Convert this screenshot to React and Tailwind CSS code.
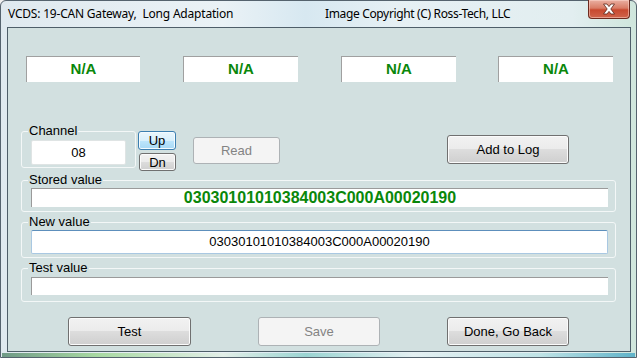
const CLIENT_BG = 'bg-[#d2e0e0]';

function NaBox({ className = '' }) {
  return (
    <div className={`flex h-[26px] items-center justify-center border-l border-t border-[#a0a0a0] bg-white text-[15px] font-bold text-[#0a870a] ${className}`}>
      N/A
    </div>
  );
}

function GroupBox({ label, className = '', children }) {
  return (
    <div className={`relative rounded-[3px] border border-[#f3f7f7] ${className}`}>
      <span className={`absolute -top-[9px] left-[6px] px-[1px] text-[13px] leading-[15px] text-black ${CLIENT_BG}`}>
        {label}
      </span>
      {children}
    </div>
  );
}

function Button({ children, className = '', disabled = false, hot = false }) {
  const look = disabled
    ? 'border-[#adb2b5] bg-[#f4f4f4] text-[#838383]'
    : hot
      ? 'border-[#3c7fb1] bg-[linear-gradient(#eaf6fd,#d9f0fc_50%,#bee6fd_50%,#a7d9f5)] text-black shadow-[inset_0_0_0_1px_#f4fbff]'
      : 'border-[#707070] bg-[linear-gradient(#f2f2f2,#ebebeb_50%,#dddddd_50%,#cfcfcf)] text-black shadow-[inset_0_0_0_1px_#fbfbfb]';
  return (
    <div className={`flex items-center justify-center rounded-[3px] border text-[13px] leading-none ${look} ${className}`}>
      {children}
    </div>
  );
}

function CloseButton() {
  return (
    <div className="flex h-[19px] w-[42px] items-center justify-center rounded-b-[4px] border border-t-0 border-[#6d2a1e] bg-[linear-gradient(#eab0a2,#d97c66_45%,#c8492f_55%,#d0654c)] shadow-[inset_0_0_0_1px_rgba(255,220,210,0.5)]">
      <svg width="14" height="12" viewBox="0 0 14 12">
        <path
          d="M1.5 1 H5 L7 3.6 L9 1 H12.5 L8.8 6 L12.5 11 H9 L7 8.4 L5 11 H1.5 L5.2 6 Z"
          fill="#ffffff"
          stroke="#5a2318"
          strokeWidth="0.8"
          strokeLinejoin="round"
        />
      </svg>
    </div>
  );
}

export default function App() {
  return (
    <div className="h-[358px] w-[637px] overflow-hidden bg-[#f0f0f0] font-['Liberation_Sans',Arial,sans-serif]">
      {/* ── Window frame ─────────────────────────────────────────────── */}
      <div className="relative h-[358px] w-[637px] rounded-t-[6px] border border-[#55636e] bg-[linear-gradient(90deg,#dfe9ef,#eaf2f6_35%,#d7e8f1_48%,#e6f0f4_62%,#e2eef0_90%,#cfe6dc)]">
        {/* Title bar */}
        <div className="flex h-[26px] items-start">
          <span className="ml-[7px] mt-[5px] w-[317px] font-['Noto_Sans',sans-serif] text-[12px] leading-[16px] tracking-[-0.2px] text-black">
            VCDS: 19-CAN Gateway,&nbsp; Long Adaptation
          </span>
          <span className="mt-[5px] font-['Noto_Sans',sans-serif] text-[12px] leading-[16px] tracking-[-0.35px] text-black">
            Image Copyright (C) Ross-Tech, LLC
          </span>
          <div className="ml-auto mr-[6px] -mt-px">
            <CloseButton />
          </div>
        </div>

        {/* Client area */}
        <div className={`ml-[6px] h-[325px] w-[624px] border border-[#4e5e69] ${CLIENT_BG}`}>
          {/* N/A readouts */}
          <div className="mt-[28px] flex pl-[18px]">
            <NaBox className="w-[114px]" />
            <NaBox className="ml-[43px] w-[115px]" />
            <NaBox className="ml-[43px] w-[115px]" />
            <NaBox className="ml-[42px] w-[115px]" />
          </div>

          {/* Channel / Up / Dn / Read / Add to Log */}
          <div className="mt-[49px] flex items-start pl-[13px]">
            <GroupBox label="Channel" className="h-[37px] w-[115px]">
              <div className="ml-[9px] mt-[8px] flex h-[25px] w-[95px] items-center justify-center rounded-[2px] border border-[#dfe4e4] bg-white text-[13px] text-black">
                08
              </div>
            </GroupBox>
            <div className="ml-[2px] flex flex-col">
              <Button hot className="h-[19px] w-[38px]">Up</Button>
              <Button className="ml-px mt-[3px] h-[18px] w-[37px]">Dn</Button>
            </div>
            <Button disabled className="ml-[17px] mt-[6px] h-[27px] w-[87px]">Read</Button>
            <Button className="ml-[167px] mt-[4px] h-[29px] w-[122px]">Add to Log</Button>
          </div>

          {/* Stored value */}
          <GroupBox label="Stored value" className="ml-[13px] mt-[9px] h-[32px] w-[595px]">
            <div className="ml-[9px] mt-[7px] flex h-[19px] w-[577px] items-center justify-center border-l border-t border-[#9a9a9a] bg-white text-[16px] font-bold text-[#0a870a]">
              03030101010384003C000A00020190
            </div>
          </GroupBox>

          {/* New value */}
          <GroupBox label="New value" className="ml-[13px] mt-[10px] h-[36px] w-[595px]">
            <div className="ml-[9px] mt-[7px] flex h-[24px] w-[577px] items-center justify-center rounded-[2px] border border-[#a9c8e2] border-t-[#5d8fbc] bg-white text-[13px] text-black">
              03030101010384003C000A00020190
            </div>
          </GroupBox>

          {/* Test value */}
          <GroupBox label="Test value" className="ml-[13px] mt-[10px] h-[34px] w-[595px]">
            <div className="ml-[9px] mt-[8px] h-[18px] w-[577px] border-l border-t border-[#9a9a9a] bg-white" />
          </GroupBox>

          {/* Bottom buttons */}
          <div className="mt-[15px] flex pl-[60px]">
            <Button className="h-[29px] w-[123px]">Test</Button>
            <Button disabled className="ml-[67px] h-[29px] w-[122px]">Save</Button>
            <Button className="ml-[67px] h-[29px] w-[122px]">Done, Go Back</Button>
          </div>
        </div>

        {/* Bottom glass edge */}
        <div className="mx-[1px] mt-[1px] h-[4px] bg-[linear-gradient(90deg,#6f9a86,#a8d9a2_15%,#e3efe8_35%,#9ad4d2_48%,#e4f0f2_65%,#bfe3e6_85%,#5fb3c9)]" />
      </div>
    </div>
  );
}
